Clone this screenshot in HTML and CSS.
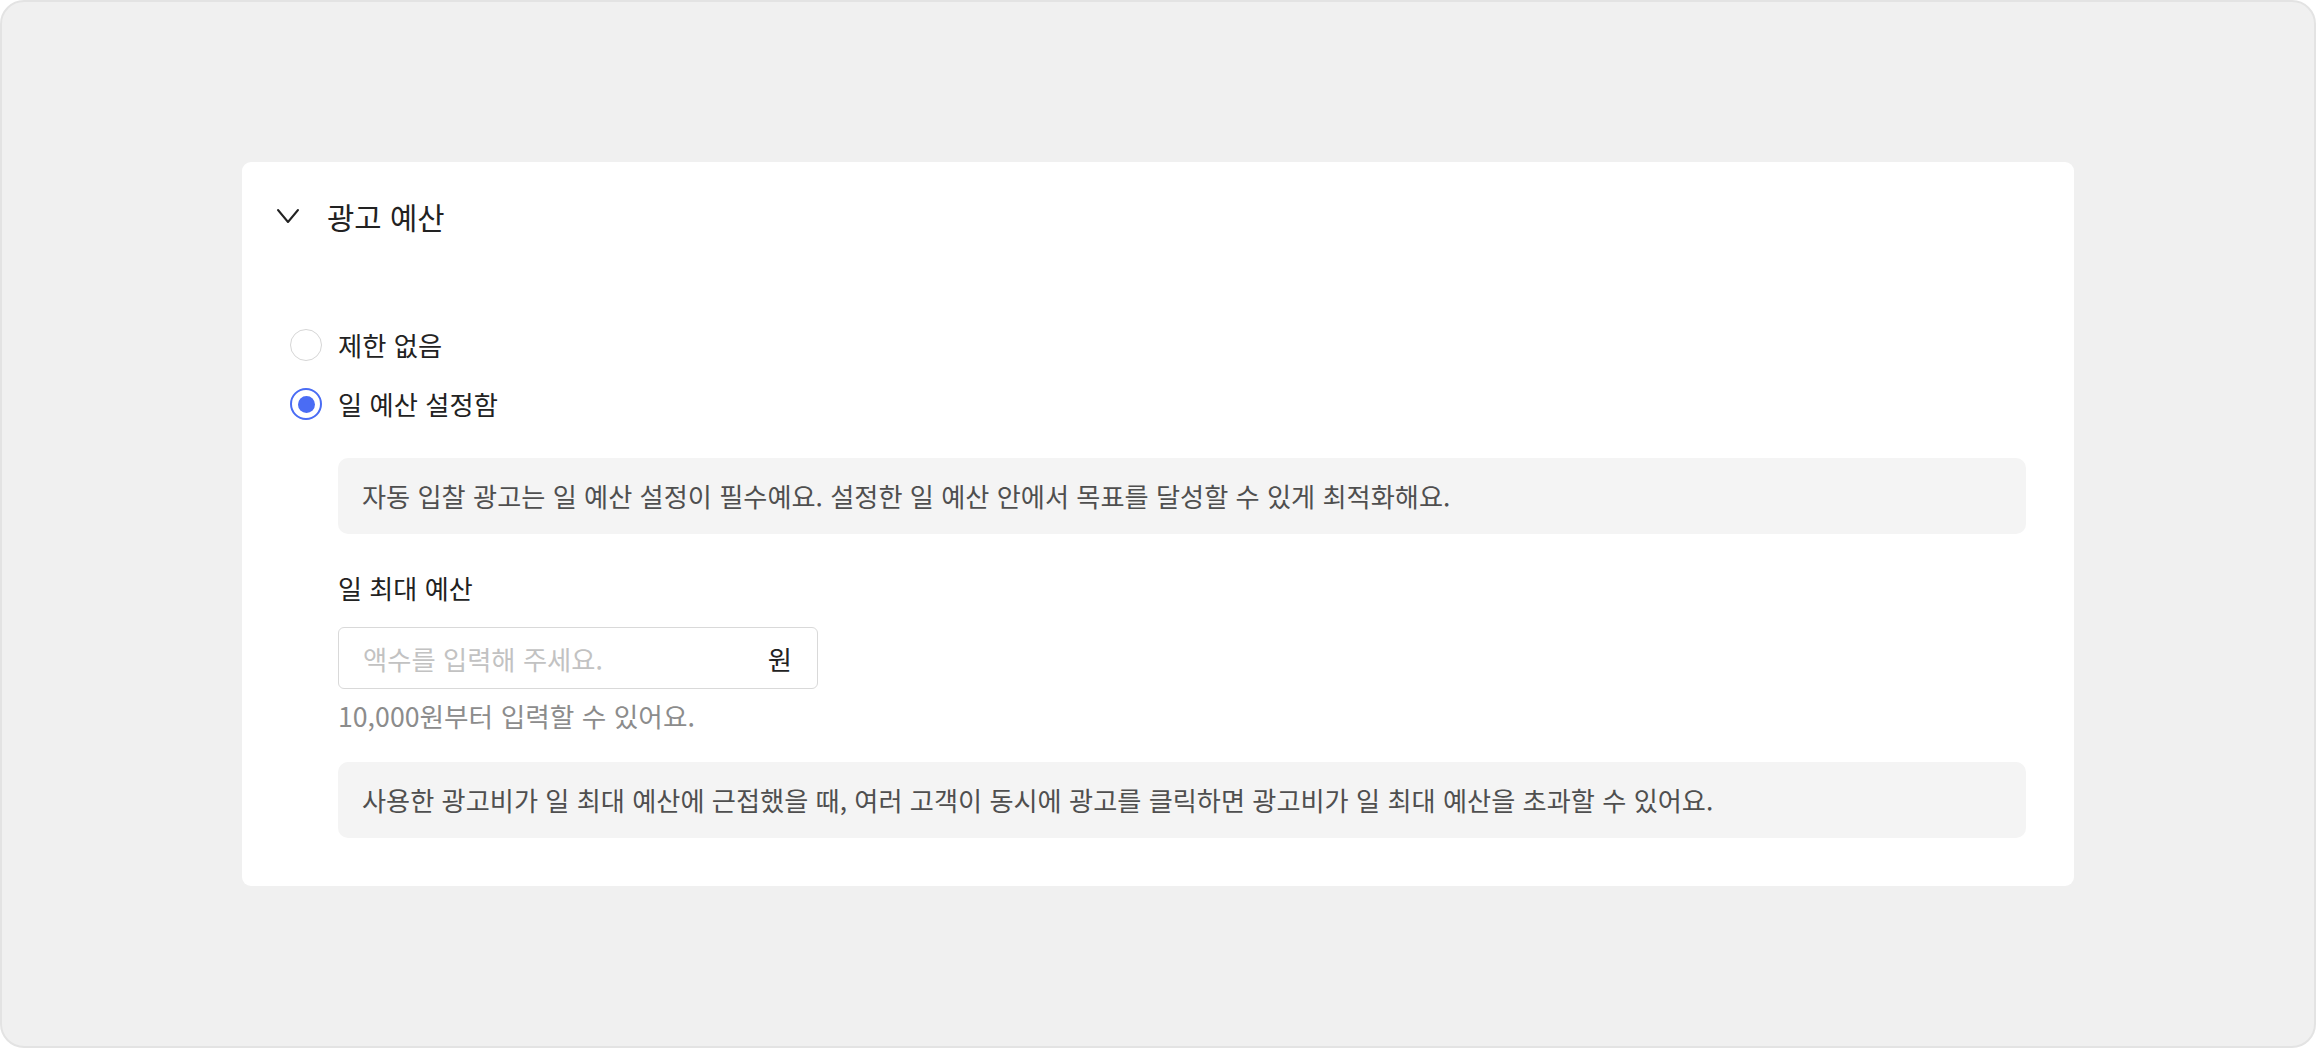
FILE: index.html
```html
<!DOCTYPE html>
<html lang="ko">

<head>
    <meta charset="UTF-8">
    <meta name="viewport" content="width=device-width, initial-scale=1.0">

    <link rel="stylesheet" href="styles.css">
</head>

<body>
    <div class="frame">
        <div class="card">
            <div class="card-header">
                <svg class="chevron" width="36" height="36" viewBox="0 0 36 36">
                    <path d="M8 11 L18 23 L28 11" fill="none" stroke="#222" stroke-width="2" stroke-linecap="round" stroke-linejoin="round" />
                </svg>
                <h2>광고 예산</h2>
            </div>

            <div class="card-body">
                <div class="radio-list">
                    <label class="radio-row">
                        <span class="radio"></span>
                        <span>제한 없음</span>
                    </label>
                    <label class="radio-row">
                        <span class="radio checked"></span>
                        <span>일 예산 설정함</span>
                    </label>
                </div>

                <div class="budget">
                    <div class="notice">자동 입찰 광고는 일 예산 설정이 필수예요. 설정한 일 예산 안에서 목표를 달성할 수 있게 최적화해요.</div>

                    <div class="field-label">일 최대 예산</div>
                    <div class="amount-input">
                        <input type="text" placeholder="액수를 입력해 주세요.">
                        <span class="unit">원</span>
                    </div>
                    <div class="helper">10,000원부터 입력할 수 있어요.</div>

                    <div class="notice notice-last">사용한 광고비가 일 최대 예산에 근접했을 때, 여러 고객이 동시에 광고를 클릭하면 광고비가 일 최대 예산을 초과할 수 있어요.</div>
                </div>
            </div>
        </div>
    </div>
</body>

</html>
```

FILE: styles.css
```css
* {
    margin: 0;
    padding: 0;
    box-sizing: border-box;
}

body {
    font-family: 'Noto Sans CJK KR', 'Noto Sans', sans-serif;
    background: #ffffff;
    width: 2316px;
    height: 1048px;
    overflow: hidden;
}

.frame {
    width: 2316px;
    height: 1048px;
    background: #f0f0f0;
    border: 2px solid #e3e3e3;
    border-radius: 24px;
    padding: 160px 240px 0 240px;
}

.card {
    background: #fff;
    border-radius: 9px;
}

.card-header {
    display: flex;
    align-items: center;
    padding: 37px 28px;
}

.chevron {
    display: block;
    flex-shrink: 0;
}

h2 {
    font-size: 29.7px;
    font-weight: 400;
    color: #222;
    line-height: 36px;
    margin-left: 21px;
}

.card-body {
    padding: 55px 48px 48px 48px;
}

.radio-list {
    display: flex;
    flex-direction: column;
    gap: 23px;
}

.radio-row {
    display: flex;
    align-items: center;
    gap: 16px;
    font-size: 26.3px;
    line-height: 36px;
    color: #222;
}

.radio {
    width: 32px;
    height: 32px;
    flex-shrink: 0;
    border-radius: 50%;
    border: 1.5px solid #d6d6d6;
    background: #fff;
    display: flex;
    align-items: center;
    justify-content: center;
}

.radio.checked {
    border: 2px solid #4a6cf4;
}

.radio.checked::after {
    content: '';
    width: 17px;
    height: 17px;
    border-radius: 50%;
    background: #4a6cf4;
}

.budget {
    margin-left: 48px;
    margin-top: 36px;
}

.notice {
    background: #f4f4f4;
    border-radius: 10px;
    padding: 20px 24px;
    font-size: 26.2px;
    line-height: 36px;
    color: #4f4f4f;
}

.field-label {
    margin-top: 36px;
    font-size: 26.1px;
    line-height: 36px;
    color: #222;
}

.amount-input {
    margin-top: 21px;
    width: 480px;
    height: 62px;
    border: 1.5px solid #d9d9d9;
    border-radius: 6px;
    display: flex;
    align-items: center;
    padding: 0 25px 0 24px;
}

.amount-input input {
    flex: 1;
    min-width: 0;
    border: none;
    outline: none;
    background: transparent;
    font-family: inherit;
    font-size: 26.3px;
    color: #222;
}

.amount-input input::placeholder {
    color: #c2c2c2;
}

.unit {
    font-size: 26.3px;
    color: #222;
}

.helper {
    margin-top: 9px;
    font-size: 26.7px;
    line-height: 36px;
    color: #8c8c8c;
}

.notice-last {
    margin-top: 28px;
}
```
